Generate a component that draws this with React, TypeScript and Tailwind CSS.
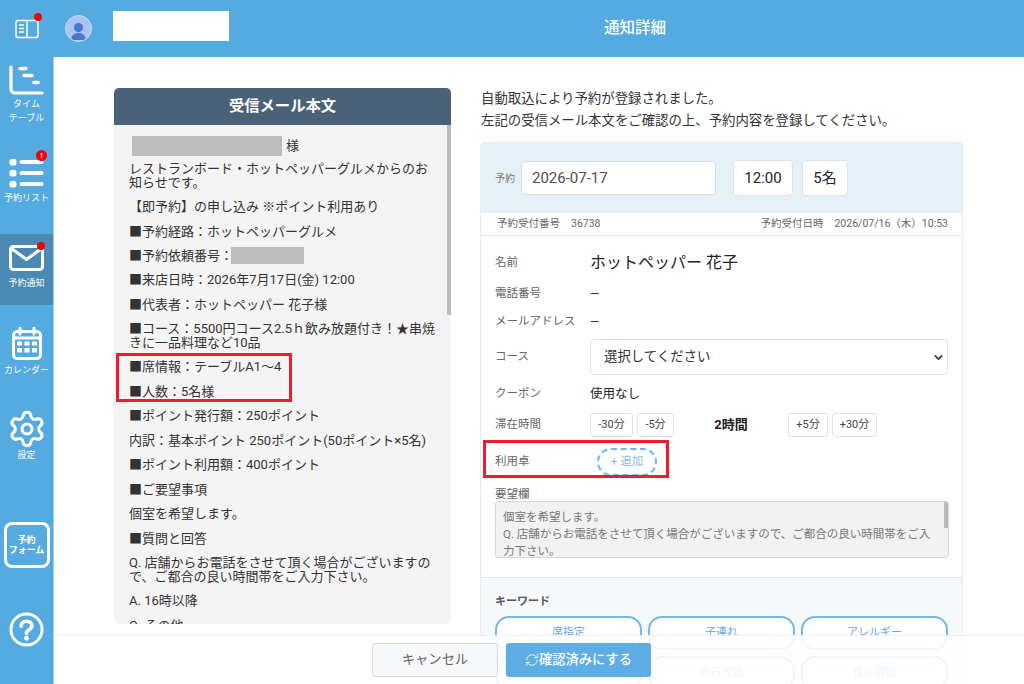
import { ReactNode } from "react";
import { ChevronDown, RefreshCw, Settings } from "lucide-react";

const fontStack = "font-['Roboto','Noto_Sans_CJK_JP',sans-serif]";

function Dot({ className, mark }: { className: string; mark?: boolean }) {
  return (
    <span className={`absolute rounded-full bg-[#f50000] text-white flex items-center justify-center text-[8px] font-bold leading-none ${className}`}>
      {mark ? "!" : ""}
    </span>
  );
}

function TimetableIcon() {
  return (
    <svg width="35" height="31" viewBox="0 0 35 31" fill="none" stroke="white" strokeLinecap="round">
      <path d="M2 2v22a4 4 0 0 0 4 4h27" strokeWidth="3.2" />
      <path d="M11 3.500h6M15 10.500h8M25 17.500h4" strokeWidth="3.600" />
    </svg>
  );
}

function ListIcon() {
  return (
    <svg width="35" height="30" viewBox="0 0 35 30" fill="none" stroke="white" strokeLinecap="round">
      <rect x="0.500" y="1" width="7" height="6.500" rx="2" fill="white" stroke="none" />
      <rect x="0.500" y="12" width="7" height="6.500" rx="2" fill="white" stroke="none" />
      <rect x="0.500" y="23" width="7" height="6.500" rx="2" fill="white" stroke="none" />
      <path d="M12.500 4h20M12.500 15h20M12.500 26h20" strokeWidth="4" />
    </svg>
  );
}

function MailIcon() {
  return (
    <svg width="35" height="26" viewBox="0 0 35 26" fill="none" stroke="white" strokeWidth="3" strokeLinejoin="round">
      <rect x="1.500" y="1.500" width="32" height="23" rx="3" />
      <path d="M2.500 3.500 17.500 14.500 32.500 3.500" />
    </svg>
  );
}

function CalendarIcon() {
  return (
    <svg width="30" height="33" viewBox="0 0 30 33" fill="none">
      <path d="M8 1v6M22 1v6" stroke="white" strokeWidth="3" strokeLinecap="round" />
      <rect x="1.500" y="4.500" width="27" height="27" rx="4" stroke="white" strokeWidth="3" />
      <path d="M1.500 11h27" stroke="white" strokeWidth="3" />
      <path d="M5 14.500h5v4H5zM12.500 14.500h5v4h-5zM20 14.500h5v4h-5zM5 21h5v4.500H5zM12.500 21h5v4.500h-5zM20 21h5v4.500h-5z" fill="white" />
    </svg>
  );
}

function HelpIcon() {
  return (
    <svg width="35" height="35" viewBox="0 0 36 36" fill="none" stroke="white">
      <circle cx="18" cy="18" r="16" strokeWidth="3" />
      <path d="M12.500 14.500c0-3.200 2.400-5 5.500-5s5.500 1.900 5.500 4.700c0 4.300-5.500 3.800-5.500 7.800" strokeWidth="3.800" strokeLinecap="round" />
      <circle cx="18" cy="27" r="2.500" fill="white" stroke="none" />
    </svg>
  );
}

function BookIcon() {
  return (
    <svg width="24" height="20" viewBox="0 0 24 20" fill="none" stroke="white">
      <rect x="1" y="1.500" width="22" height="17" rx="2" strokeWidth="1.500" />
      <path d="M12 1.500v17" strokeWidth="1.500" />
      <path d="M4 6h5M4 9.500h5M4 13h5" strokeWidth="1.600" />
    </svg>
  );
}

function NavItem({ box, label, icon, active }: { box: string; label: ReactNode; icon: ReactNode; active?: boolean }) {
  return (
    <div className={`flex flex-col items-center text-white text-[9px] leading-[14px] text-center shrink-0 ${box} ${active ? "bg-[#4a8ab5]" : ""}`}>
      <div className="relative">{icon}</div>
      {label}
    </div>
  );
}

function Sidebar() {
  return (
    <aside className="w-[54px] shrink-0 bg-[#55aae0] border-r border-[#9fd0ee] flex flex-col items-stretch">
      <NavItem
        box="h-[88px] pt-[8px]"
        icon={<TimetableIcon />}
        label={<span className="mt-[1px]">タイム<br />テーブル</span>}
      />
      <NavItem
        box="h-[89px] pt-[13px]"
        icon={<><ListIcon /><Dot className="w-[11px] h-[11px] -top-[8px] right-[-3px]" mark /></>}
        label={<span className="mt-[3px]">予約リスト</span>}
      />
      <NavItem
        active
        box="h-[71px] pt-[11px]"
        icon={<><MailIcon /><Dot className="w-[8px] h-[8px] -top-[3px] right-[-1px]" /></>}
        label={<span className="mt-[5px]">予約通知</span>}
      />
      <NavItem
        box="h-[86px] pt-[22px]"
        icon={<CalendarIcon />}
        label={<span className="mt-[3px]">カレンダー</span>}
      />
      <NavItem
        box="h-[86px] pt-[18px]"
        icon={<Settings size={40} strokeWidth={1.800} color="white" />}
        label={<span className="-mt-[1px]">設定</span>}
      />
      <div className="mt-[45px] mx-auto w-[46px] h-[46px] rounded-[8px] border-[3px] border-white text-white text-[9px] leading-[10px] font-bold flex items-center justify-center text-center">
        <span>予約<br />フォーム</span>
      </div>
      <div className="mt-[44px] flex justify-center">
        <HelpIcon />
      </div>
    </aside>
  );
}

const mailRows: ReactNode[] = [
  "【即予約】の申し込み ※ポイント利用あり",
  "■予約経路：ホットペッパーグルメ",
  <span className="flex items-center h-[13px]">■予約依頼番号：<span className="w-[73px] h-[17px] bg-[#bdbdbd] -ml-[2px]" /></span>,
  "■来店日時：2026年7月17日(金) 12:00",
  "■代表者：ホットペッパー 花子様",
  "■コース：5500円コース2.5ｈ飲み放題付き！★串焼きに一品料理など10品",
  "■席情報：テーブルA1～4",
  "■人数：5名様",
  "■ポイント発行額：250ポイント",
  "内訳：基本ポイント 250ポイント(50ポイント×5名)",
  "■ポイント利用額：400ポイント",
  "■ご要望事項",
  "個室を希望します。",
  "■質問と回答",
  "Q. 店舗からお電話をさせて頂く場合がございますので、ご都合の良い時間帯をご入力下さい。",
  "A. 16時以降",
  "Q. その他",
];

function MailPanel() {
  return (
    <section className="relative w-[337px] h-[536px] shrink-0 rounded-[5px] overflow-hidden bg-[#f4f4f4] flex flex-col">
      <h2 className="h-[37px] shrink-0 bg-[#4a6178] text-white text-[15.300px] font-bold flex items-center justify-center">受信メール本文</h2>
      <div className="pl-[15px] pr-[16px] pt-[11px] text-[13px] leading-[13.500px] text-[#333] overflow-hidden">
        <div className="flex items-center h-[20px] mb-[6px] pl-[3px]">
          <span className="w-[150px] h-[20px] bg-[#bdbdbd] mr-[4px]" />様
        </div>
        <p className="mb-[11px]">レストランボード・ホットペッパーグルメからのお知らせです。</p>
        {mailRows.map((row, i) => (
          <div key={i} className="mb-[11px]">{row}</div>
        ))}
      </div>
      <span className="absolute right-0 top-[37px] w-[4px] h-[190px] bg-[#bbbbbb]" />
      <span className="absolute left-[2px] top-[265px] w-[176px] h-[49px] border-[3px] border-[#ee1c2e]" />
    </section>
  );
}

function FieldLabel({ children }: { children: ReactNode }) {
  return <div className="w-[95px] shrink-0 text-[11.500px] text-[#666]">{children}</div>;
}

function SmallBtn({ children, w }: { children: ReactNode; w: string }) {
  return (
    <div className={`h-[24px] ${w} rounded-[3px] border border-[#dee2e6] bg-white text-[11px] text-[#444] flex items-center justify-center`}>{children}</div>
  );
}

function Chip({ children }: { children: string }) {
  return (
    <div className="h-[34px] rounded-[14px] border-2 border-[#74b8e6] bg-white text-[11px] text-[#6aa9d6] flex items-center justify-center">{children}</div>
  );
}

function ReservationCard() {
  return (
    <div className="w-[483px] rounded-[4px] overflow-hidden border border-[#e9edf1] bg-white">
      <div className="h-[70px] bg-[#e6f1f7] flex items-center pl-[14px]">
        <span className="text-[10px] text-[#777] w-[26px]">予約</span>
        <div className="w-[195px] h-[34px] rounded-[4px] border border-[#d5dde5] bg-white pl-[10px] text-[15px] text-[#495057] flex items-center">2026-07-17</div>
        <div className="ml-[17px] w-[60px] h-[36px] rounded-[4px] border border-[#dee2e6] bg-white text-[15px] text-[#212529] flex items-center justify-center">12:00</div>
        <div className="ml-[9px] w-[46px] h-[36px] rounded-[4px] border border-[#dee2e6] bg-white text-[15px] text-[#212529] flex items-center justify-center">5名</div>
      </div>
      <div className="h-[23px] border-b border-[#e5e8eb] flex items-center justify-between pl-[16px] pr-[14px] text-[10.500px] text-[#666]">
        <span>予約受付番号<span className="ml-[11px]">36738</span></span>
        <span>予約受付日時<span className="ml-[11px]">2026/07/16（木）10:53</span></span>
      </div>
      <div className="px-[14px] pb-[19px]">
        <div className="flex items-center h-[20px] mt-[17px]">
          <FieldLabel>名前</FieldLabel>
          <span className="text-[16px] text-[#222]">ホットペッパー 花子</span>
        </div>
        <div className="flex items-center h-[20px] mt-[11px]">
          <FieldLabel>電話番号</FieldLabel><span className="text-[12px] text-[#333]">―</span>
        </div>
        <div className="flex items-center h-[20px] mt-[8px]">
          <FieldLabel>メールアドレス</FieldLabel><span className="text-[12px] text-[#333]">―</span>
        </div>
        <div className="flex items-center mt-[7px]">
          <FieldLabel>コース</FieldLabel>
          <div className="w-[360px] h-[36px] rounded-[4px] border border-[#dee2e6] pl-[13px] pr-[2px] text-[13.400px] text-[#333] flex items-center justify-between">
            選択してください
            <ChevronDown size={13} strokeWidth={3} color="#343a40" />
          </div>
        </div>
        <div className="flex items-center h-[20px] mt-[9px]">
          <FieldLabel>クーポン</FieldLabel><span className="text-[12.500px] text-[#222]">使用なし</span>
        </div>
        <div className="flex items-center mt-[9px]">
          <FieldLabel>滞在時間</FieldLabel>
          <SmallBtn w="w-[43px]">-30分</SmallBtn>
          <div className="ml-[4px]"><SmallBtn w="w-[37px]">-5分</SmallBtn></div>
          <span className="w-[114px] text-center text-[13px] font-bold text-[#222]">2時間</span>
          <SmallBtn w="w-[40px]">+5分</SmallBtn>
          <div className="ml-[4px]"><SmallBtn w="w-[45px]">+30分</SmallBtn></div>
        </div>
        <div className="flex items-center mt-[11px] h-[28px]">
          <div className="w-[102px] shrink-0 text-[11.500px] text-[#666]">利用卓</div>
          <div className="w-[60px] h-[28px] rounded-full border-2 border-dashed border-[#6fb7e8] text-[11.500px] text-[#82b9e6] flex items-center justify-center">+ 追加</div>
        </div>
        <div className="text-[11.500px] text-[#666] leading-[14px] mt-[11px]">要望欄</div>
        <div className="relative h-[57px] w-[454px] rounded-[3px] border border-[#d5d5d5] bg-[#f2f2f2] overflow-hidden pl-[7px] pr-[14px] pt-[7px] text-[11.500px] leading-[17px] text-[#777]">
          個室を希望します。<br />
          Q. 店舗からお電話をさせて頂く場合がございますので、ご都合の良い時間帯をご入力下さい。
          <span className="absolute right-0 top-0 w-[4px] h-[26px] bg-[#bbb]" />
        </div>
      </div>
      <div className="bg-[#f7f8fa] border-t border-[#e5e8eb] px-[14px] pt-[17px] pb-[30px]">
        <div className="text-[11px] font-bold text-[#555] leading-[14px] mb-[7px]">キーワード</div>
        <div className="grid grid-cols-3 gap-x-[6px] gap-y-[6px]">
          {["席指定", "子連れ", "アレルギー", "記念日", "飲み放題", "食べ放題"].map((k) => (
            <Chip key={k}>{k}</Chip>
          ))}
        </div>
      </div>
    </div>
  );
}

export default function App() {
  return (
    <div className={`relative w-[1024px] h-[684px] overflow-hidden bg-white flex flex-col ${fontStack}`}>
      <header className="h-[57px] shrink-0 bg-[#55aae0] flex items-center text-white">
        <div className="w-[246px] shrink-0 flex items-center">
          <div className="relative ml-[15px]">
            <BookIcon />
            <Dot className="w-[8px] h-[8px] -top-[6px] right-[-3px]" />
          </div>
          <div className="ml-[26px] w-[27px] h-[27px] rounded-full bg-[#a9c4f2] border border-[#c6e2f5] flex flex-col items-center justify-end overflow-hidden">
            <span className="w-[9px] h-[9px] rounded-full bg-[#4a76cf]" />
            <span className="mt-[1px] mb-[1px] w-[15px] h-[7px] rounded-t-[7px] bg-[#4a76cf]" />
          </div>
          <div className="ml-[21px] w-[116px] h-[30px] bg-white -mt-[5px]" />
        </div>
        <h1 className="flex-1 text-center text-[15.500px] font-medium">通知詳細</h1>
      </header>
      <div className="flex-1 flex min-h-0">
        <Sidebar />
        <main className="flex-1 flex items-start pl-[60px] pt-[31px] overflow-hidden">
          <MailPanel />
          <div className="ml-[29px] w-[483px]">
            <p className="text-[13.400px] leading-[22px] text-[#333] pl-[1px] mb-[10px]">
              自動取込により予約が登録されました。<br />
              左記の受信メール本文をご確認の上、予約内容を登録してください。
            </p>
            <ReservationCard />
          </div>
        </main>
      </div>
      <footer className="absolute left-[54px] right-0 bottom-0 h-[49px] bg-white/90 border-t border-[#eeeeee] flex items-start pt-[7px] pl-[318px] gap-[8px]">
        <div className="w-[126px] h-[34px] rounded-[3px] border border-[#d5d8dc] bg-[#f7f8fa] text-[13.300px] text-[#666] flex items-center justify-center">キャンセル</div>
        <div className="w-[145px] h-[34px] rounded-[3px] bg-[#5eade4] text-[13.300px] font-medium text-white flex items-center justify-center">
          <RefreshCw size={14} strokeWidth={1.500} />確認済みにする
        </div>
      </footer>
      <span className="absolute left-[483px] top-[440px] w-[186px] h-[38px] border-[3px] border-[#ee1c2e]" />
    </div>
  );
}
